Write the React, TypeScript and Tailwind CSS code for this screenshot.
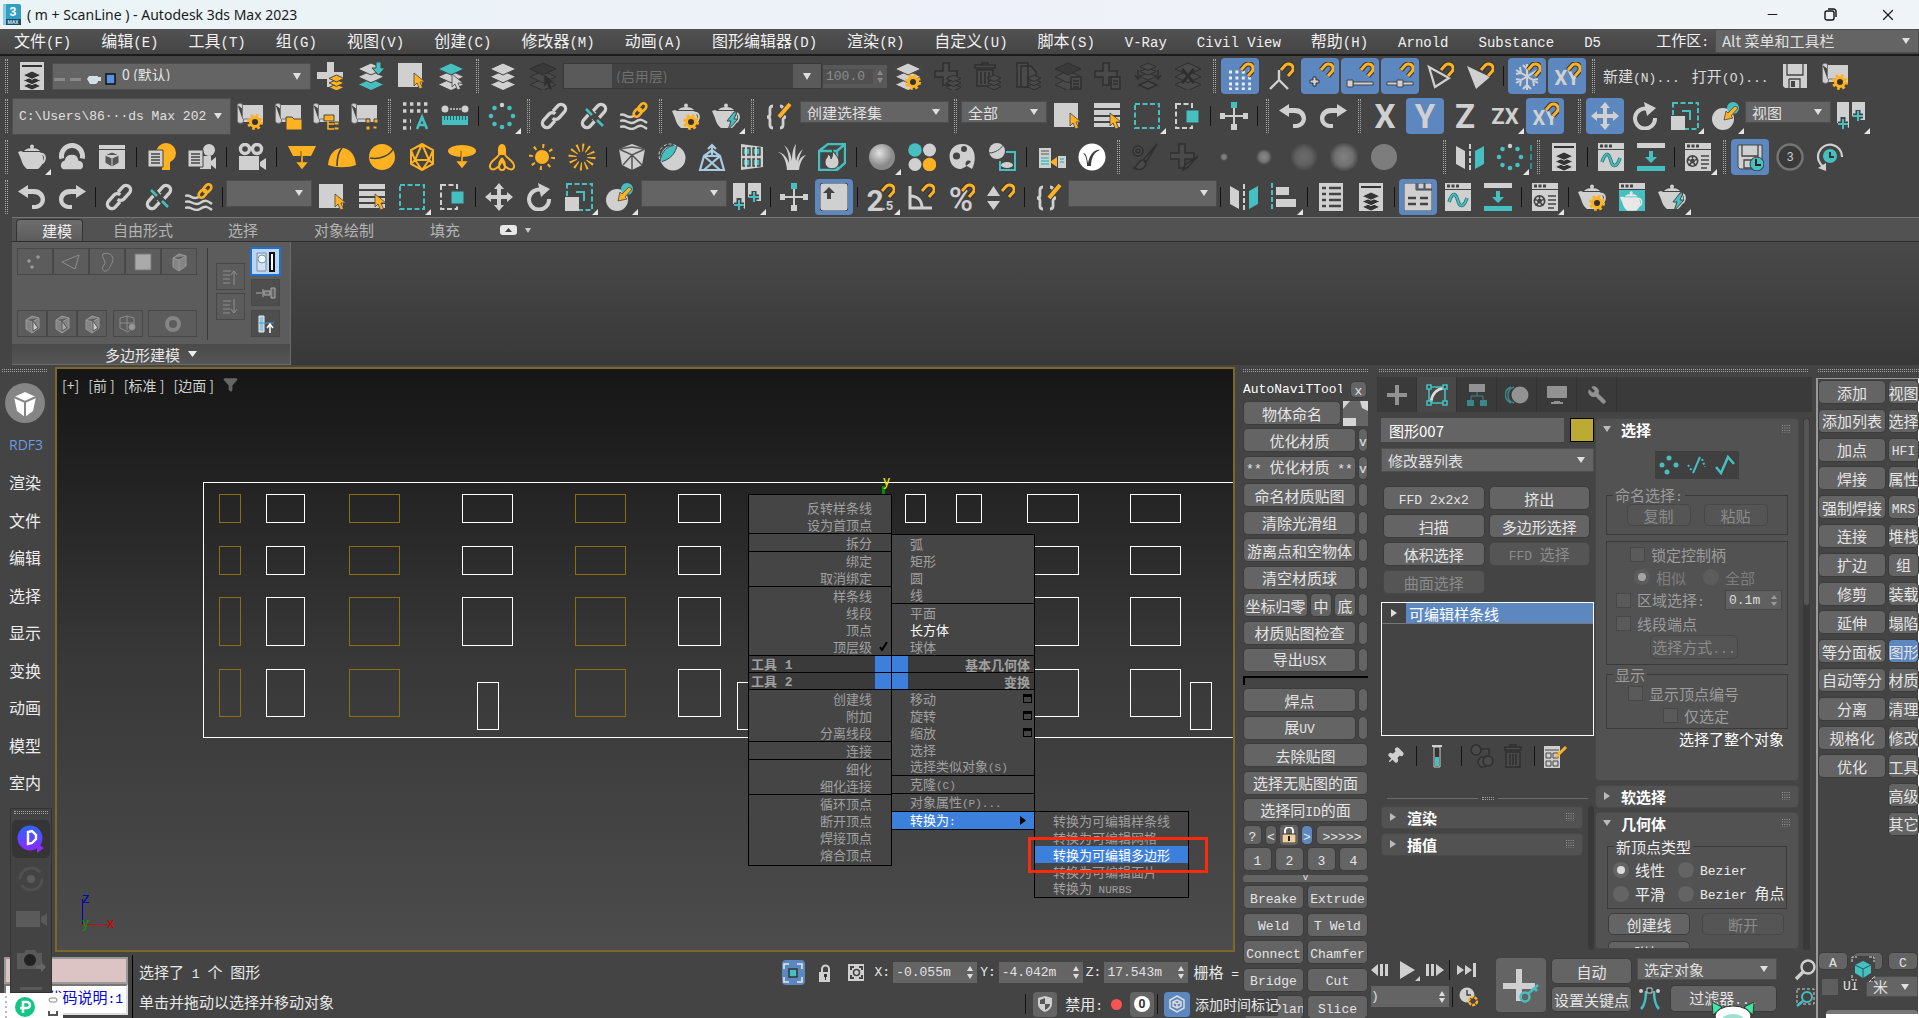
import React from 'react';
import { Minus, X, Wrench, Pin, Filter } from 'lucide-react';

const LIGHT = '#d0d0d0';
const TEAL = '#45bfc0';
const AMBER = '#ffb221';
const DARK = '#2f2f2f';
const BG = '#444444';

/* ---------- icon building blocks (28x28 canvas) ---------- */

interface StackProps {
  x?: number;
  y?: number;
  w?: number;
  colors?: string[];
  stroke?: string;
}

const Stack: React.FC<StackProps> = ({ x = 1, y = 1, w = 26, colors = [LIGHT, LIGHT, LIGHT], stroke = BG }) => {
  const h = w * 0.46;
  const step = w * 0.3;
  return (
    <g stroke={stroke} strokeWidth={1}>
      {colors
        .map((c, i) => (
          <path
            key={i}
            fill={c}
            d={`M${x} ${y + h / 2 + i * step}L${x + w / 2} ${y + i * step}L${x + w} ${y + h / 2 + i * step}L${x + w / 2} ${y + h + i * step}Z`}
          />
        ))
        .reverse()}
    </g>
  );
};

const Magnet = () => (
  <g fill="none">
    <path d="M15 8l4-4.500a4.600 4.600 0 0 1 7 6l-4 4.500" stroke="#333" strokeWidth={5} />
    <path d="M15 8l4-4.500a4.600 4.600 0 0 1 7 6l-4 4.500" stroke={AMBER} strokeWidth={3} />
  </g>
);

const Gear = ({ x = 19, y = 20 }: { x?: number; y?: number }) => (
  <g fill="none">
    <circle cx={x} cy={y} r={6.5} stroke={AMBER} strokeWidth={3} strokeDasharray="2.600 2.500" />
    <circle cx={x} cy={y} r={4.5} stroke={AMBER} strokeWidth={3} fill="#333" />
  </g>
);

const Cursor = ({ x = 16, y = 12, c = AMBER }: { x?: number; y?: number; c?: string }) => (
  <path
    transform={`translate(${x} ${y})`}
    d="M0 0v13l3-3 2.500 6 3-1.200L6 9h5z"
    fill={c}
    stroke={BG}
    strokeWidth={0.8}
  />
);

const Teapot = ({ c = LIGHT }: { c?: string }) => (
  <g fill={c}>
    <path d="M5 9h17c5 4 4 13-2 17H9c-4-3-5-7-6-10L0 9l3-1z" />
    <path d="M6 8c3-4 13-4 16 0z" />
    <circle cx={14} cy={3.500} r={2} />
    <path d="M22 11c6-2 7 8 0 10" fill="none" stroke={c} strokeWidth={2} />
  </g>
);

const Chain = ({ c = LIGHT }: { c?: string }) => (
  <g transform="rotate(-48 14 14)" fill="none" stroke={c} strokeWidth={3.4}>
    <path d="M11 18H4a4.500 4.500 0 0 1 0-9h8a4.500 4.500 0 0 1 4.500 4.500" />
    <path d="M17 10h7a4.500 4.500 0 0 1 0 9h-8a4.500 4.500 0 0 1-4.500-4.500" />
  </g>
);

const Scroll = () => (
  <g>
    <path d="M7 3h20v17H7z" fill={LIGHT} />
    <path d="M1.500 3c0-2 5-2 5 0v14M1.500 3v16c0 3 6 3 6 0v-2H20" fill={LIGHT} stroke="#777" strokeWidth={1} />
  </g>
);

const Window = ({ children, fill = LIGHT }: { children?: React.ReactNode; fill?: string }) => (
  <g>
    <path d="M1 0h26v6H1z" fill={LIGHT} />
    <path d="M3 1.500h3v3H3zM7.500 1.500h3v3h-3zM12 1.500h3v3h-3z" fill="#444" />
    <path d="M1 7h26v21H1z" fill={fill} />
    {children}
  </g>
);

const Sheet = () => (
  <g fill={LIGHT}>
    <path d="M1 1h26v5H1zM1 8h26v5H1zM1 15h26v4H1zM1 21h26v4H1z" />
  </g>
);

const Glyph = ({ text, size = 28, weight = 700 }: { text: string; size?: number; weight?: number }) => (
  <text
    x={14}
    y={14 + size * 0.36}
    textAnchor="middle"
    fontFamily="Roboto, sans-serif"
    fontWeight={weight}
    fontSize={size}
    fill={LIGHT}
  >
    {text}
  </text>
);

const dashedBox = (c: string, d: string) => (
  <path d={d} fill="none" stroke={c} strokeWidth={2} strokeDasharray="5 2.500" />
);

const ringDots = (
  <g fill={TEAL}>
    <circle cx={14} cy={3} r={2.2} fill={LIGHT} />
    <circle cx={21.5} cy={6} r={2.3} />
    <circle cx={25} cy={14} r={2.3} />
    <circle cx={21.5} cy={22} r={2.3} />
    <circle cx={14} cy={25} r={2.3} />
    <circle cx={6.5} cy={22} r={2.3} />
    <circle cx={3} cy={14} r={2.3} />
    <circle cx={6.5} cy={6} r={2.3} />
  </g>
);

const blob = (r: number, c: string, id: string) => (
  <g>
    <radialGradient id={id}>
      <stop offset="0" stopColor={c} />
      <stop offset="0.600" stopColor={c} stopOpacity={0.7} />
      <stop offset="1" stopColor={c} stopOpacity={0} />
    </radialGradient>
    <circle cx={14} cy={14} r={r} fill={`url(#${id})`} />
  </g>
);

const waves = (
  <g fill="none" stroke={LIGHT} strokeWidth={2.4}>
    <path d="M0 13c5-3 7 5 14 1M0 19c6-3 9 5 15 1s8-2 12 1M0 25c6-3 9 5 15 1s8-2 12 1" />
    <g transform="rotate(-48 20 8)" stroke={AMBER} strokeWidth={2.6}>
      <rect x={12} y={5} width={9} height={6} rx={3} />
      <rect x={19} y={5} width={9} height={6} rx={3} />
    </g>
  </g>
);

const off = { fill: '#4a4a4a', stroke: DARK, strokeWidth: 1.5 };

const ICONS: Record<string, React.ReactNode> = {
  explorer: (
    <g>
      <path d="M2 0h24v28H2z" fill={LIGHT} />
      <path d="M4 3h20v2H4z" fill="#333" />
      <Stack x={5} y={9} w={18} colors={['#333', '#333', '#333']} stroke={LIGHT} />
    </g>
  ),
  layerNew: (
    <g>
      <path d="M10 0h7v10h9v7H17v8h-7v-8H0v-7h10z" fill={LIGHT} />
      <Stack x={12} y={13} w={15} colors={[AMBER, AMBER, AMBER]} />
    </g>
  ),
  layerAdd: (
    <g>
      <Stack colors={[LIGHT, LIGHT, TEAL]} />
      <path d="M19 0h5v6h4l-6.500 7L15 6h4z" fill={TEAL} stroke={BG} />
    </g>
  ),
  select: (
    <g>
      <path d="M1 1h24v24H1z" fill={LIGHT} />
      <Cursor x={17} y={11} />
    </g>
  ),
  layerSelect: (
    <g>
      <Stack colors={[TEAL, LIGHT, LIGHT]} />
      <Cursor x={15} y={12} c={LIGHT} />
    </g>
  ),
  layers: <Stack />,
  layersOff: (
    <g>
      <Stack colors={['#3a3a3a', '#4a4a4a', '#4a4a4a']} stroke={DARK} />
      <Cursor x={15} y={12} c={DARK} />
    </g>
  ),
  layerGear: (
    <g>
      <Stack />
      <Gear />
    </g>
  ),
  addOff: (
    <g>
      <path d="M9 1h6v8h8v6h-8v8H9v-8H1V9h8z" {...off} />
      <Stack x={12} y={13} w={15} colors={['#4a4a4a', '#4a4a4a', '#4a4a4a']} stroke={DARK} />
    </g>
  ),
  trashOff: (
    <g>
      <path d="M8 3V1h6v2M1 3h20v3H1zM3 8h16v16H3z" {...off} />
      <path d="M7 10v12M11 10v12M15 10v12" {...off} />
      <Stack x={13} y={13} w={14} colors={['#4a4a4a', '#4a4a4a', '#4a4a4a']} stroke={DARK} />
    </g>
  ),
  copyOff: (
    <g>
      <path d="M3 1h11v24H3zM7 4h10l5 6v15H7z" {...off} />
      <Stack x={13} y={13} w={14} colors={['#4a4a4a', '#4a4a4a', '#4a4a4a']} stroke={DARK} />
    </g>
  ),
  layersPasteOff: (
    <g>
      <Stack colors={['#3a3a3a', '#4a4a4a', '#4a4a4a']} stroke={DARK} />
      <path d="M17 15h10v12H17zM19 19h6M19 22h6M19 25h6" {...off} />
    </g>
  ),
  addPasteOff: (
    <g>
      <path d="M9 1h6v8h8v6h-8v8H9v-8H1V9h8z" {...off} />
      <path d="M17 15h9v12h-9zM19 19h5M19 22h5" {...off} />
    </g>
  ),
  layersDownOff: (
    <g>
      <Stack x={6} y={1} w={16} colors={['#4a4a4a', '#4a4a4a', '#4a4a4a']} stroke={DARK} />
      <path d="M4 8v8M1 13l3 4 3-4M24 8v8M21 13l3 4 3-4M5 23l9-4 9 4-9 4z" {...off} />
    </g>
  ),
  layersXOff: (
    <g>
      <Stack colors={['#4a4a4a', '#4a4a4a', '#4a4a4a']} stroke={DARK} />
      <path d="M8 7l12 14M20 7L8 21" stroke={DARK} strokeWidth={3} />
    </g>
  ),
  snapGrid: (
    <g>
      <path
        d="M3 10h22M3 16h22M3 22h22M3 27h22"
        stroke="#eee"
        strokeWidth={3}
        strokeDasharray="3 3.400"
      />
      <Magnet />
    </g>
  ),
  snapPivot: (
    <g>
      <path d="M13 8v10L4 27M13 18l9 9" fill="none" stroke={LIGHT} strokeWidth={2.4} />
      <Magnet />
    </g>
  ),
  snapVertex: (
    <g>
      <path d="M4 18h3v-3h3v3h3v3h-3v3H7v-3H4z" fill={LIGHT} stroke="#333" />
      <Magnet />
    </g>
  ),
  snapEnd: (
    <g>
      <path d="M7 20h20v3H7z" fill={LIGHT} stroke="#444" />
      <path d="M1 18h6v7H1z" fill={LIGHT} stroke="#444" />
      <Magnet />
    </g>
  ),
  snapMid: (
    <g>
      <path d="M1 20h26v3H1z" fill={LIGHT} stroke="#444" />
      <path d="M11 18h6v7h-6z" fill={LIGHT} stroke="#444" />
      <Magnet />
    </g>
  ),
  snapFace: (
    <g>
      <path d="M3 5l6 20 14-9z" fill="none" stroke={LIGHT} strokeWidth={2.2} />
      <Magnet />
    </g>
  ),
  snapFill: (
    <g>
      <path d="M1 4l9 23 14-12z" fill={LIGHT} />
      <Magnet />
    </g>
  ),
  snapFrozen: (
    <g>
      <path
        d="M14 2v26M3 8l22 13M25 8L3 21M10 3l4 4 4-4M10 27l4-4 4 4M3 12l5-1-1-6M25 17l-5 1 1 6M3 17l5 1-1 6M25 12l-5-1"
        fill="none"
        stroke={LIGHT}
        strokeWidth={2}
      />
      <Magnet />
    </g>
  ),
  snapXY: (
    <g>
      <g transform="translate(0 2)">
        <Glyph text="XY" size={20} />
      </g>
      <Magnet />
    </g>
  ),
  save: (
    <g>
      <path d="M2 2h24v24H4l-2-2z" fill={LIGHT} />
      <path d="M6 2v11h16V2M8 17h11v9M8 17v9" fill="none" stroke="#444" strokeWidth={1.3} />
      <path d="M10 19h4v6h-4z" fill="#444" />
    </g>
  ),
  projGear: (
    <g>
      <Scroll />
      <Gear />
    </g>
  ),
  projFolder: (
    <g>
      <Scroll />
      <path d="M12 15h6l2 2h8v11H12z" fill={AMBER} stroke={BG} />
    </g>
  ),
  projTree: (
    <g>
      <Scroll />
      <path d="M12 13h10v6H12zM22 20h5v3h-5zM22 25h5v3h-5z" fill={AMBER} stroke={BG} />
      <path d="M16 19v8h6M16 22h6" fill="none" stroke={AMBER} strokeWidth={1.5} />
    </g>
  ),
  projNodes: (
    <g>
      <Scroll />
      <path d="M16 17h4v4h-4zM24 17h4v4h-4zM16 24h4v4h-4zM23 24h4v3h-4z" fill={AMBER} stroke={BG} />
    </g>
  ),
  gridA: (
    <g>
      <path d="M2 2h25M2 9h25M2 19h8M2 26h8" stroke={LIGHT} strokeWidth={3.4} strokeDasharray="3.400 3.600" />
      <path d="M16 27l5-12 5 12M18 23h7" fill="none" stroke={TEAL} strokeWidth={2.6} />
    </g>
  ),
  ruler: (
    <g>
      <circle cx={4} cy={7} r={3.5} fill={LIGHT} />
      <circle cx={24} cy={7} r={3.5} fill={LIGHT} />
      <path d="M9 7h11" stroke={LIGHT} strokeWidth={1.5} strokeDasharray="2 1" />
      <path d="M1 14h26v9H1z" fill={TEAL} />
      <path d="M3 16h23" stroke="#2c5f60" strokeWidth={4} strokeDasharray="1 2" />
    </g>
  ),
  ring: ringDots,
  link: <Chain />,
  unlink: (
    <g>
      <Chain />
      <path d="M5 5l19 20" stroke={BG} strokeWidth={6} />
      <path d="M6 7l6 6M17 18l6 6" stroke={TEAL} strokeWidth={2.6} />
    </g>
  ),
  bind: waves,
  potGear: (
    <g>
      <Teapot />
      <Gear />
    </g>
  ),
  potFlash: (
    <g>
      <Teapot />
      <path d="M22 10l-7 9h4l-3 9 10-11h-4l3-7z" fill={TEAL} stroke={BG} />
    </g>
  ),
  braces: (
    <g fill="none">
      <path
        d="M9 4C5 4 6 8 6 12c0 2-1 3-3 3 2 0 3 1 3 3 0 4-1 8 3 8M16 4c4 0 3 4 3 8 0 2 1 3 3 3-2 0-3 1-3 3 0 4 1 8-3 8"
        stroke={LIGHT}
        strokeWidth={2.8}
      />
      <path d="M15 15L26 2" stroke={BG} strokeWidth={6} />
      <path d="M15 15L26 2" stroke={AMBER} strokeWidth={4} />
    </g>
  ),
  selectName: (
    <g>
      <Sheet />
      <Cursor x={17} y={11} />
    </g>
  ),
  region: dashedBox(TEAL, 'M2 2h24v24H2z'),
  crossing: (
    <g>
      {dashedBox(LIGHT, 'M3 2h16v24H3z')}
      <path d="M13 8h13v13H13z" fill={TEAL} stroke={BG} />
    </g>
  ),
  pivotCross: (
    <g fill={LIGHT}>
      <path d="M13 5h2v18h-2zM3 13h22v2H3zM0 11h5v6H0zM23 11h5v6h-5zM11 22h6v6h-6z" />
      <path d="M11 0h6v6h-6z" fill={TEAL} />
    </g>
  ),
  undo: <path d="M10 2v4h6c14 0 15 19 1 20h-3v-4h2c9 0 9-11-1-11h-5v4L0 8.500z" fill={LIGHT} />,
  redo: <path d="M18 2v4h-6c-14 0-15 19-1 20h3v-4h-2c-9 0-9-11 1-11h5v4l10-6.500z" fill={LIGHT} />,
  axisX: <Glyph text="X" size={33} />,
  axisY: <Glyph text="Y" size={33} />,
  axisZ: <Glyph text="Z" size={33} />,
  axisZX: <Glyph text="ZX" size={22} />,
  move: (
    <path
      d="M14 0l5 6h-3v6h6V9l6 5-6 5v-3h-6v6h3l-5 6-5-6h3v-6H6v3l-6-5 6-5v3h6V6H9z"
      fill={LIGHT}
    />
  ),
  rotate: (
    <g>
      <path d="M17 7A10 10 0 1 0 24 16" fill="none" stroke={LIGHT} strokeWidth={4} />
      <path d="M13 0l12 6-9 8z" fill={LIGHT} />
    </g>
  ),
  scale: (
    <g>
      {dashedBox(TEAL, 'M2 1h25v26H2z')}
      <path d="M0 14h14v14H0z" fill={LIGHT} />
      <path d="M11 9h8v9" fill="none" stroke={TEAL} strokeWidth={2} />
    </g>
  ),
  place: (
    <g>
      <circle cx={12} cy={17} r={11} fill={LIGHT} />
      <circle cx={22} cy={6} r={6} fill={TEAL} />
      <path d="M24 4l-7 7-2-2-2 9 9-2-2-2 7-8z" fill={AMBER} stroke="#444" strokeWidth={0.8} />
    </g>
  ),
  pivotUse: (
    <g>
      <path d="M0 0h12v26L6 21H0zM15 0h13v18h-6l-7-4z" fill={LIGHT} />
      <path d="M6 15v13M1 22h10M21 8v12M16 14h10" stroke={BG} strokeWidth={5} />
      <path d="M6 17v10M1 22h10M21 9v10M16 14h10" stroke={TEAL} strokeWidth={2} />
    </g>
  ),
  teapot: <Teapot />,
  sphereCloud: (
    <g>
      <circle cx={14} cy={13} r={10.500} fill="none" stroke={LIGHT} strokeWidth={5} strokeDasharray="38 100" transform="rotate(165 14 13)" />
      <path d="M5 27c-5-3-3-9 1-10 2-8 14-8 15 0 6 1 6 8 2 10z" fill={LIGHT} stroke={BG} strokeWidth={1.5} />
    </g>
  ),
  cubeWindow: (
    <g>
      <path d="M1 2h26v4H1z" fill={LIGHT} />
      <path d="M1 7h26v19H1z" fill={LIGHT} />
      <path d="M14 9l7 3v8l-7 4-7-4v-8zM7 12l7 3 7-3M14 15v9" fill="#555" stroke={LIGHT} strokeWidth={1} />
    </g>
  ),
  lightList: (
    <g>
      <circle cx={18} cy={10} r={10} fill={AMBER} />
      <path d="M14 19h8v8h-8z" fill={AMBER} />
      <path d="M0 7h15v17H0z" fill={LIGHT} stroke={BG} />
      <path d="M3 11h9M3 14h9M3 17h9M3 20h9" stroke="#444" strokeWidth={1.5} />
    </g>
  ),
  camList: (
    <g>
      <circle cx={21} cy={7} r={6} fill={LIGHT} />
      <path d="M12 13h11v13H12zM28 14v12l-5-4v-4z" fill={LIGHT} />
      <path d="M0 7h15v17H0z" fill={LIGHT} stroke={BG} />
      <path d="M3 11h9M3 14h9M3 17h9M3 20h9" stroke="#444" strokeWidth={1.5} />
    </g>
  ),
  camera: (
    <g>
      <circle cx={7} cy={6} r={4.5} fill="none" stroke={LIGHT} strokeWidth={3.4} />
      <circle cx={19} cy={6} r={4.5} fill="none" stroke={LIGHT} strokeWidth={3.4} />
      <path d="M1 13h20v14H1zM28 15v12l-6-4v-4z" fill={LIGHT} />
    </g>
  ),
  lightPlane: (
    <g fill={AMBER}>
      <path d="M0 3h28l-5 10H5z" />
      <path d="M14 9v14M10 20l4 5 4-5z" stroke={AMBER} strokeWidth={1.6} />
      <path d="M12.500 8h1v6h-1z" fill="#7a5510" />
    </g>
  ),
  lightDome: (
    <g>
      <path d="M0 22C1 10 8 5 14 5s13 5 14 17c-8 3-20 3-28 0z" fill={AMBER} />
      <path d="M14 5c-4 4-5 11-5 18" fill="none" stroke={BG} strokeWidth={1.6} />
    </g>
  ),
  lightSphere: (
    <g>
      <circle cx={14} cy={14} r={13} fill={AMBER} />
      <path d="M2 15c10 2 20-3 23-9" fill="none" stroke={BG} strokeWidth={1.6} />
    </g>
  ),
  lightMesh: (
    <path
      d="M14 1l11 6v14l-11 6-11-6V7zM14 1L7 17h14zM3 7l4 10-4 4M25 7l-4 10 4 4M7 17l7 10 7-10"
      fill="none"
      stroke={AMBER}
      strokeWidth={2}
    />
  ),
  lightDisc: (
    <g>
      <ellipse cx={14} cy={8} rx={14} ry={6} fill={AMBER} />
      <path d="M14 8v15M10 19l4 5 4-5z" fill={AMBER} stroke={AMBER} strokeWidth={1.6} />
      <path d="M12.500 8h1v6h-1z" fill="#7a5510" />
    </g>
  ),
  lightIes: (
    <g>
      <path d="M10 7c0-8 8-8 8 0v5h-8z" fill={AMBER} />
      <path d="M11 12C7 17 1 19 2 24s10 2 12-8c2 10 11 13 12 8s-5-7-9-12M14 15c-4 5-4 12 0 12s4-7 0-12" fill="none" stroke={AMBER} strokeWidth={2} />
    </g>
  ),
  sun: (
    <g>
      <circle cx={14} cy={14} r={7} fill={AMBER} />
      <circle cx={14} cy={14} r={11} fill="none" stroke={AMBER} strokeWidth={4} strokeDasharray="2 6.640" />
    </g>
  ),
  sunRays: <circle cx={14} cy={14} r={9.5} fill="none" stroke={AMBER} strokeWidth={8} strokeDasharray="1.600 3.370" />,
  boxGeo: (
    <g>
      <path d="M1 6L14 1l13 5-3 16-10 5-10-5z" fill={LIGHT} />
      <path d="M1 6l13 6 13-6M14 12v15M14 12L5 22M14 12l10 10M1 6l13-2 13 2" fill="none" stroke="#555" strokeWidth={1.5} />
    </g>
  ),
  clipper: (
    <g>
      <circle cx={15} cy={15} r={12.5} fill={LIGHT} />
      <path d="M2 19C3 8 10 2 19 2c-1 8-7 15-17 17z" fill={TEAL} stroke={BG} />
      <circle cx={12} cy={12} r={11} fill="none" stroke={LIGHT} strokeDasharray="3 2" />
    </g>
  ),
  tower: (
    <g fill="none" stroke="#a9cbe0" strokeWidth={2.2}>
      <path d="M6 13h16l4 14H2zM6 13l16 14M22 13L6 27M14 13V2M10 6l4-4 4 4M6 13l8-6 8 6" />
    </g>
  ),
  lattice: (
    <g>
      <path d="M3 1l22 3v20L3 27z" fill={LIGHT} />
      <path d="M5 5h7v7H5zM15 5h7v7h-7zM5 16h7v7H5zM15 16h7v7h-7z" fill={TEAL} stroke="#444" strokeWidth={1.4} />
      <path d="M8 3v22M18 3v22" stroke={LIGHT} strokeWidth={2} />
    </g>
  ),
  fur: (
    <path
      d="M9 27C8 17 5 11 0 9c6 1 9 6 11 11C11 12 9 6 6 2c5 4 7 10 8 16 0-7 1-13 4-17-1 5-1 12 0 17 1-5 3-9 7-12-3 5-4 9-5 14 2-5 4-7 8-8-5 5-6 9-7 15z"
      fill={LIGHT}
    />
  ),
  fireBox: (
    <g>
      <path d="M1 8l9-7h17v19l-8 7H1zM1 8h18v19M19 8l8-7" fill="none" stroke={TEAL} strokeWidth={2.4} />
      <path d="M14 5c1 6 7 8 7 14 0 9-14 9-14 0 0-4 3-4 3-8 2 1 3 3 3 5 2-3 2-7 1-11z" fill={LIGHT} stroke={BG} />
    </g>
  ),
  material: (
    <g>
      <radialGradient id="ballShade" cx="0.400" cy="0.350">
        <stop offset="0" stopColor="#e2e2e2" />
        <stop offset="1" stopColor="#8a8a8a" />
      </radialGradient>
      <circle cx={14} cy={14} r={13} fill="url(#ballShade)" />
    </g>
  ),
  materials: (
    <g fill={LIGHT}>
      <circle cx={7} cy={7} r={6.8} fill={TEAL} />
      <circle cx={21.5} cy={7} r={6.5} />
      <circle cx={7} cy={21.5} r={6.5} />
      <circle cx={21.5} cy={21.5} r={6.8} fill={AMBER} />
    </g>
  ),
  palette: (
    <g>
      <path d="M14 1C5 1 0 9 2 17s8 9 11 9l6-3 5 3c5-10 4-25-10-25z" fill={LIGHT} />
      <circle cx={16} cy={6} r={3} fill={BG} />
      <circle cx={8.5} cy={13} r={3.6} fill={BG} />
      <path d="M18 23c-2-5 3-7 5-4" fill={BG} />
    </g>
  ),
  matConvert: (
    <g>
      <circle cx={9} cy={8} r={8} fill={LIGHT} />
      <path d="M1 10c6 0 12-4 14-8" stroke={BG} fill="none" />
      <path d="M18 9h9v18H12v-9" fill="none" stroke={TEAL} strokeWidth={2} />
      <ellipse cx={19} cy={22} rx={6} ry={3} fill={LIGHT} />
    </g>
  ),
  transferList: (
    <g>
      <path d="M1 5h12v20H1zM20 13h8v12h-8z" fill={LIGHT} />
      <path d="M3 8h8M3 11h8" stroke="#555" />
      <path d="M3 15h8M3 18h8M3 21h8M22 16h4M22 19h4" stroke={TEAL} strokeWidth={1.6} />
      <path d="M12 19l7-5v10z" fill={AMBER} />
    </g>
  ),
  vray: (
    <g>
      <circle cx={14} cy={14} r={13.5} fill="#fff" />
      <path d="M5 10c3 0 4 4 5 10 2-9 7-14 12-13-6 2-9 8-9 16h-4c0-6-1-10-4-13z" fill="#3c3c3c" />
    </g>
  ),
  paintOff: (
    <g>
      <circle cx={8} cy={8} r={5} {...off} />
      <circle cx={8} cy={8} r={2} {...off} />
      <path d="M27 1L14 16l2 3zM13 17c-5 0-5 6-9 8 5 3 12 1 12-5z" {...off} />
    </g>
  ),
  paintAddOff: (
    <g>
      <path d="M9 1h6v9h9v6h-9v9H9v-9H0v-6h9z" {...off} />
      <path d="M28 13L18 24l-5 3 2-5z" {...off} />
    </g>
  ),
  dot1: blob(4, '#8a8a8a', 'blob1'),
  dot2: blob(8, '#8a8a8a', 'blob2'),
  dot3: blob(14, '#6c6c6c', 'blob3'),
  dot4: blob(15, '#828282', 'blob4'),
  dot5: <circle cx={14} cy={14} r={13} fill="#7d7d7d" />,
  mirror: (
    <g>
      <path d="M0 3l9 5v18l-9-5z" fill={LIGHT} />
      <path d="M28 3l-9 5v18l9-5z" fill={TEAL} />
      <path d="M14 1v27" stroke={LIGHT} strokeWidth={2} strokeDasharray="5 2" />
    </g>
  ),
  align: (
    <g>
      <path d="M2 0v28" stroke={TEAL} strokeWidth={2} strokeDasharray="5 2" />
      <path d="M6 4h13v8H6zM6 16h20v8H6z" fill={LIGHT} />
    </g>
  ),
  curve: (
    <Window>
      <path d="M5 19c4-12 7-8 9-1s6 6 9-3" fill="none" stroke="#1d6a6a" strokeWidth={3.4} />
      <path d="M5 19c4-12 7-8 9-1s6 6 9-3" fill="none" stroke={TEAL} strokeWidth={2} />
    </Window>
  ),
  download: (
    <g>
      <path d="M0 0h28v5H0z" fill={LIGHT} />
      <path d="M0 23h28v5H0z" fill={TEAL} />
      <path d="M12 8h4v6h4l-6 6-6-6h4z" fill={TEAL} />
    </g>
  ),
  renderSet: (
    <Window>
      <circle cx={8.5} cy={18} r={6} fill="#444" />
      <circle cx={8.5} cy={18} r={3.4} fill="none" stroke={LIGHT} strokeWidth={2} strokeDasharray="2.500 1.600" />
      <path d="M17 13h8M17 17h8M17 21h8M17 25h6" stroke="#444" strokeWidth={1.6} />
    </Window>
  ),
  autosave: (
    <g>
      <path d="M2 2h24v24H4l-2-2z" fill={LIGHT} stroke="#444" />
      <path d="M6 2v11h16V2M8 17h8v8H8z" fill="none" stroke="#444" strokeWidth={1.3} />
      <circle cx={21} cy={21} r={7} fill={TEAL} stroke="#333" />
      <path d="M20 16v6h5" fill="none" stroke="#222" strokeWidth={2} />
    </g>
  ),
  count: (
    <g>
      <circle cx={14} cy={14} r={12.5} fill="#3a3a3a" stroke="#757575" strokeWidth={2.4} />
      <text x={14} y={18} textAnchor="middle" fontSize={12} fontFamily="Liberation Mono" fill={LIGHT}>
        3
      </text>
    </g>
  ),
  history: (
    <g>
      <path d="M26 14A12 12 0 1 0 8 24" fill="none" stroke={LIGHT} strokeWidth={2.2} />
      <path d="M2 25l8 3 0-8z" fill={LIGHT} />
      <circle cx={14} cy={13} r={7} fill={TEAL} />
      <path d="M14 9v5h4" fill="none" stroke="#333" strokeWidth={2} />
    </g>
  ),
  keyboard: (
    <g>
      <rect x={0} y={0} width={28} height={28} rx={3} fill={LIGHT} stroke="#444" />
      <path d="M9 4l6 6h-4v6H7v-6H3z" fill="#444" />
    </g>
  ),
  snap25: (
    <g>
      <g transform="translate(-6 3)">
        <Glyph text="2" size={30} />
      </g>
      <text x={15} y={27} fontSize={13} fontWeight={700} fontFamily="Roboto" fill={LIGHT}>
        .5
      </text>
      <Magnet />
    </g>
  ),
  snapAngle: (
    <g>
      <path d="M3 3v22h22M3 13c8 0 12 5 12 12" fill="none" stroke={LIGHT} strokeWidth={3} />
      <Magnet />
    </g>
  ),
  snapPercent: (
    <g>
      <g transform="translate(0 2)">
        <Glyph text="%" size={33} weight={500} />
      </g>
      <Magnet />
    </g>
  ),
  snapSpinner: (
    <g>
      <path d="M0 13L6.500 3l6.500 10zM0 18h13L6.500 27z" fill={LIGHT} />
      <Magnet />
    </g>
  ),
  listView: (
    <g>
      <path d="M2 0h24v28H2z" fill={LIGHT} />
      <path d="M5 5h4M12 5h12M5 11h4M12 11h12M5 17h4M12 17h12M5 23h4M12 23h12" stroke="#444" strokeWidth={2.4} />
    </g>
  ),
  ribbonToggle: (
    <g>
      <path d="M0 0h12v7h16v21H0z" fill={LIGHT} stroke="#444" />
      <path d="M14 0h6v6h-6zM21 0h7v6h-7z" fill={LIGHT} stroke="#444" />
      <path d="M4 15h8M16 15h8M4 21h8M16 21h8" stroke="#444" strokeWidth={2.4} />
    </g>
  ),
  frameWindow: (
    <Window fill={TEAL}>
      <g transform="translate(2 7) scale(0.800)">
        <Teapot c="#e8e8e8" />
      </g>
    </Window>
  ),
};

/* ---------- toolbar pieces ---------- */

const Grip = () => (
  <span className="mx-px grid w-[10px] shrink-0 place-items-center">
    <span className="h-[34px] w-[3px] border-x border-dotted border-[#a8a8a8]" />
  </span>
);

const Sep = ({ wide = false }: { wide?: boolean }) => (
  <span className={`h-5 w-px shrink-0 self-center bg-[#141414] ${wide ? 'mr-[5px] ml-1' : 'mx-[3px]'}`} />
);

const Tool = ({ name, on = false, fly = false }: { name: string; on?: boolean; fly?: boolean }) => (
  <button
    type="button"
    aria-label={name}
    className={`relative mx-px grid h-9 w-[38px] shrink-0 place-items-center rounded ${on ? 'bg-[#5d87bf]' : ''}`}
  >
    <svg width="28" height="28" viewBox="0 0 28 28">
      {ICONS[name]}
    </svg>
    {fly && (
      <svg className="absolute right-0 bottom-0" width="6" height="6">
        <path d="M6 0v6H0z" fill="#e6e6e6" />
      </svg>
    )}
  </button>
);

// "|" and "/" are separators, ":" a grip; "*" marks an active tool and "+" one with a flyout
const Tools = ({ list }: { list: string }) => (
  <>
    {list.split(' ').map((item, i) => {
      if (item === '|') return <Sep key={i} />;
      if (item === '/') return <Sep key={i} wide />;
      if (item === ':') return <Grip key={i} />;
      return <Tool key={i} name={item.replace(/[*+]/g, '')} on={item.includes('*')} fly={item.includes('+')} />;
    })}
  </>
);

const Combo = ({ value, label, className = '' }: { value: string; label: string; className?: string }) => (
  <span className={`relative block shrink-0 border border-[#4e4e4e] bg-[#646464] text-[#e0e0e0] ${className}`}>
    <select aria-label={label} className="h-full w-full appearance-none bg-transparent pr-6 pl-[6px] outline-none">
      <option>{value}</option>
    </select>
    <svg className="pointer-events-none absolute top-1/2 right-2 -translate-y-1/2" width="8" height="6">
      <path d="M0 0h8L4 6z" fill="#e0e0e0" />
    </svg>
  </span>
);

// Latin runs are set in a mono face next to the CJK glyphs
const T = ({ children, latin = 'text-[13px]' }: { children: string; latin?: string }) => (
  <span className="whitespace-pre">
    {children.split(/([\x20-\x7e]+)/).map((part, i) =>
      i % 2 ? (
        <span key={i} className={`font-['Liberation_Mono',monospace] ${latin}`}>
          {part}
        </span>
      ) : (
        part
      )
    )}
  </span>
);

interface BtnProps {
  text?: string;
  className?: string;
  disabled?: boolean;
  active?: boolean;
}

const Btn: React.FC<BtnProps> = ({ text = '', className = '', disabled = false, active = false }) => (
  <button
    type="button"
    disabled={disabled}
    aria-label={text || '选项'}
    className={`flex items-center justify-center overflow-hidden rounded-[5px] border leading-none ${
      disabled ? 'border-[#474747] bg-[#555] text-[#8b8b8b]' : 'border-[#3c3c3c] text-[#e4e4e4]'
    } ${disabled ? '' : active ? 'bg-[#5d87bf]' : 'bg-[#646464]'} ${className}`}
  >
    <T>{text}</T>
  </button>
);

const HGrip = ({ className = '' }: { className?: string }) => (
  <div className={`h-[3px] border-y border-dotted border-[#a0a0a0] ${className}`} />
);

const MENUS = [
  '文件(F)', '编辑(E)', '工具(T)', '组(G)', '视图(V)', '创建(C)', '修改器(M)', '动画(A)', '图形编辑器(D)',
  '渲染(R)', '自定义(U)', '脚本(S)', 'V-Ray', 'Civil View', '帮助(H)', 'Arnold', 'Substance', 'D5',
];

const TitleBar = () => (
  <header className="flex h-[29px] shrink-0 items-center bg-gradient-to-r from-[#eaf4f6] via-[#eef1f9] to-[#eef4f8] pl-[3px] text-[#1a1a1a]">
    <svg width="18" height="22" viewBox="0 0 18 22">
      <rect width="18" height="21" rx="2" fill="#2f9fc6" />
      <path d="M0 2v19h3V0H2z" fill="#8ccbe2" />
      <path d="M3 15h15v6H3z" fill="#1b4d66" />
      <text x="10" y="12" textAnchor="middle" fontSize="12" fontWeight="700" fontFamily="Roboto" fill="#fff">3</text>
      <text x="10" y="20" textAnchor="middle" fontSize="5" fontWeight="700" fontFamily="Roboto" fill="#cfe6ef">MAX</text>
    </svg>
    <h1 className="ml-[6px] flex-1 font-['Noto_Sans',sans-serif] text-[14px]">( m + ScanLine ) - Autodesk 3ds Max 2023</h1>
    <button type="button" aria-label="最小化" className="grid w-[58px] place-items-center"><Minus size={15} strokeWidth={1.8} /></button>
    <button type="button" aria-label="还原" className="grid w-[58px] place-items-center">
      <svg width="13" height="13" fill="none" stroke="#111" strokeWidth="1.400"><rect x="1" y="3" width="9" height="9" rx="2" /><path d="M4 1h5.500A2.500 2.500 0 0 1 12 3.500V9" /></svg>
    </button>
    <button type="button" aria-label="关闭" className="mr-[2px] grid w-[58px] place-items-center"><X size={18} strokeWidth={1.6} /></button>
  </header>
);

const MenuBar = () => (
  <nav className="flex h-[27px] shrink-0 items-center border-b-2 border-[#1c1c1c] bg-gradient-to-b from-[#525252] to-[#444] pb-[2px] pl-[14px] text-[16px] leading-none text-[#f0f0f0]">
    <div className="flex flex-1 gap-[30px]">
      {MENUS.map((m) => (
        <button key={m} type="button"><T latin="text-[14px]">{m}</T></button>
      ))}
    </div>
    <span className="mr-[6px] text-[15px]"><T>工作区:</T></span>
    <Combo label="工作区" value="Alt 菜单和工具栏" className="h-6 w-[204px] text-[15px]" />
  </nav>
);

const Toolbars = () => (
  <div className="shrink-0 text-[14px] leading-none">
    <div className="flex h-10 items-center overflow-hidden">
      <Tools list=": explorer" />
      <span className="relative flex h-[27px] w-[259px] shrink-0 items-start gap-[5px] border border-[#4e4e4e] bg-[#646464] pt-1">
        <svg className="mt-1 shrink-0" width="64" height="13">
          <path d="M1 6h11v3H1zM17 6h11v3H17z" fill="#888" />
          <path d="M36 4h9v6l-2 2h-6l-3-5zM45 5h3v4h-3z" fill="#d8dde2" />
          <rect x="53" y="2" width="9" height="10" fill="#5b93e0" stroke="#111" strokeWidth="1.500" />
        </svg>
        <select aria-label="当前层" className="-mt-px flex-1 appearance-none bg-transparent text-[#e6e6e6] outline-none">
          <option>0 (默认)</option>
        </select>
        <svg className="pointer-events-none absolute top-[9px] right-[9px]" width="8" height="7"><path d="M0 0h8L4 7z" fill="#e0e0e0" /></svg>
      </span>
      <Tools list="layerNew layerAdd select layerSelect : layers layersOff" />
      <span className="flex h-[26px] w-[259px] shrink-0 border border-[#383838] bg-[#5a5a5a]">
        <select disabled aria-label="启用层" className="ml-12 w-[181px] appearance-none bg-[#424242] pl-1 text-[#707070] opacity-100">
          <option>(启用层)</option>
        </select>
        <svg className="m-auto" width="8" height="7"><path d="M0 0h8L4 7z" fill="#e0e0e0" /></svg>
      </span>
      <span className="mx-px flex h-[23px] w-[64px] shrink-0 items-center bg-[#585858]">
        <input disabled aria-label="不透明度" defaultValue="100.0" className="w-[50px] bg-[#505050] pl-[3px] font-['Liberation_Mono'] text-[13px] text-[#8c8c8c]" />
        <svg className="m-auto" width="6" height="13"><path d="M0 5h6L3 0zM0 8h6l-3 5z" fill="#888" /></svg>
      </span>
      <Tools list="layerGear addOff trashOff copyOff layersPasteOff addPasteOff layersDownOff layersXOff : snapGrid* snapPivot snapVertex* snapEnd* snapMid* snapFace snapFill | snapFrozen* snapXY* :" />
      <button type="button" className="ml-1 shrink-0 text-[15px] text-[#dcdcdc]"><T>新建(N)...</T></button>
      <button type="button" className="mr-[6px] ml-3 shrink-0 text-[15px] text-[#dcdcdc]"><T>打开(O)...</T></button>
      <Tools list="save projGear" />
    </div>
    <div className="flex h-10 items-center overflow-hidden">
      <Grip />
      <Combo label="项目文件夹" value="C:\Users\86···ds Max 2023" className="h-[37px] w-[219px] font-['Liberation_Mono'] text-[13px]" />
      <span className="flex [&>button]:w-9">
        <Tools list="projGear projFolder projTree projNodes" />
      </span>
      <Tools list=": gridA ruler | ring+ : link unlink bind : potGear potFlash+ : braces" />
      <Combo label="选择集" value="创建选择集" className="mb-2 ml-[2px] h-[22px] w-[149px] text-[15px]" />
      <Grip />
      <Combo label="过滤" value="全部" className="mb-2 h-[22px] w-[86px] text-[15px]" />
      <Tools list="select selectName region+ crossing | pivotCross | : undo redo : axisX axisY* axisZ axisZX+ snapXY*" />
      <span className="w-2 shrink-0" />
      <Tools list=": move* rotate scale+ place+" />
      <Combo label="坐标系" value="视图" className="mb-2 h-[22px] w-[86px] text-[15px]" />
      <Tools list="pivotUse+" />
    </div>
    <div className="flex h-[41px] items-center overflow-hidden">
      <Tools list=": teapot+ sphereCloud cubeWindow / lightList camList / camera / lightPlane lightDome lightSphere lightMesh lightDisc lightIes sun sunRays / boxGeo clipper tower lattice fur fireBox / material+ materials palette matConvert / transferList vray : paintOff paintAddOff dot1 dot2 dot3 dot4 dot5" />
      <span className="w-[34px] shrink-0" />
      <Tools list=": mirror ring+" />
      <span className="h-6 w-px shrink-0 border-l-2 border-dashed border-[#2f8f8f]" />
      <Tools list=": explorer | curve download | renderSet+ : autosave* count history" />
    </div>
    <div className="flex h-10 items-center overflow-hidden">
      <Tools list=": undo redo | link unlink bind |" />
      <Combo label="选择过滤器" value=" " className="mb-2 h-[27px] w-[86px]" />
      <Tools list="select selectName region+ crossing | move rotate scale+ place+" />
      <Combo label="参考坐标系" value=" " className="mb-2 ml-[2px] h-[27px] w-[86px]" />
      <Tools list="pivotUse+ | pivotCross keyboard* | snap25+ snapAngle snapPercent snapSpinner | braces" />
      <Combo label="命名选择集" value=" " className="mb-2 h-[27px] w-[149px]" />
      <Tools list="| mirror align+ | listView explorer | ribbonToggle* curve download | renderSet+ | potGear frameWindow potFlash+" />
    </div>
  </div>
);

/* ---------- ribbon ---------- */

const RibbonBtn = ({ label, className = 'w-9', children }: { label: string; className?: string; children: React.ReactNode }) => (
  <button type="button" aria-label={label} className={`grid h-[27px] place-items-center border border-[#484848] ${className}`}>
    <svg width="20" height="20" viewBox="0 0 20 20" fill="none" stroke="#8d8d8d">{children}</svg>
  </button>
);

const cubeShape = <path d="M4 6l6-4 7 2v10l-7 5-6-4zM4 6l6 2 7-4M10 8v10" fill="#848484" stroke="#999" />;

const Ribbon = () => (
  <section className="ml-3 flex h-[148px] shrink-0 flex-col border-t border-[#777]">
    <div className="flex h-6 items-center border-b border-[#2e2e2e] bg-[#525252] text-[15px] leading-none text-[#b4b4b4]">
      <button type="button" className="ml-1 h-[22px] w-[67px] self-end rounded-t border border-b-0 border-[#333] bg-gradient-to-b from-[#6e6e6e] to-[#5c5c5c] pl-[25px] text-left whitespace-nowrap text-[#eee]">建模</button>
      <button type="button" className="ml-[30px]">自由形式</button>
      <button type="button" className="ml-[55px]">选择</button>
      <button type="button" className="ml-[56px]">对象绘制</button>
      <button type="button" className="ml-[56px]">填充</button>
      <svg className="ml-10" width="32" height="12">
        <rect y="1" width="17" height="10" rx="3" fill="#e8e8e8" />
        <path d="M5 8h7L8.500 4z" fill="#444" />
        <path d="M25 4h6l-3 5z" fill="#ccc" />
      </svg>
    </div>
    <div className="flex-1 bg-gradient-to-b from-[#494949] to-[#383838]">
      <div className="flex h-full w-[279px] flex-col border-r border-b border-[#6a6a6a] bg-[#5c5c5c]">
        <div className="flex flex-1 gap-[10px] pt-[6px] pl-[5px]">
          <div className="flex w-[180px] flex-col justify-between pb-[7px]">
            <div className="flex">
              <RibbonBtn label="顶点"><path d="M3 8h2v2H3zM12 4h2v2h-2zM6 14h2v2H6z" stroke="#aaa" /></RibbonBtn>
              <RibbonBtn label="边"><path d="M1 10L18 3l-4 14z" /></RibbonBtn>
              <RibbonBtn label="边界"><path d="M6 2c8-3 12 4 9 9s-3 7-6 8-5-3-2-6-3-8-1-11z" /></RibbonBtn>
              <RibbonBtn label="多边形"><path d="M2 2h16v16H2z" fill="#aaa" stroke="#777" /></RibbonBtn>
              <RibbonBtn label="元素">{cubeShape}</RibbonBtn>
            </div>
            <div className="flex">
              <RibbonBtn label="预览关闭" className="w-[30px]">{cubeShape}<path d="M11 7v10l5-3z" fill="#ccc" stroke="#555" /></RibbonBtn>
              <RibbonBtn label="预览子对象" className="w-[30px]">{cubeShape}<path d="M10 7v10l5-3z" fill="#aaa" stroke="#555" /></RibbonBtn>
              <RibbonBtn label="预览多个" className="w-[30px]">{cubeShape}<path d="M11 7v10l5-3z" fill="#ccc" stroke="#555" /></RibbonBtn>
              <RibbonBtn label="约束" className="ml-[6px] w-[30px]"><path d="M2 4l7-2 7 2v7l-6 7-8-4zM9 2v14M2 9h14" /><circle cx="14" cy="13" r="3" fill="#999" /></RibbonBtn>
              <RibbonBtn label="软选择" className="ml-[5px] w-[49px]"><circle cx="10" cy="10" r="6" stroke="#858585" strokeWidth="4" /></RibbonBtn>
            </div>
          </div>
          <div className="mr-[-2px] mb-1 w-px bg-[#3a3a3a]" />
          <div className="flex flex-col gap-[3px] pt-[15px]">
            <RibbonBtn label="上一个修改器" className="w-[29px]"><path d="M2 4h8M2 8h7M2 12h7M2 16h7M13 18V4M10 8l3-4 3 4" /></RibbonBtn>
            <RibbonBtn label="下一个修改器" className="w-[29px]"><path d="M2 4h8M2 8h7M2 12h7M2 16h7M13 2v14M10 12l3 4 3-4" /></RibbonBtn>
          </div>
          <div className="-ml-1 flex flex-col gap-1">
            <RibbonBtn label="显示最终结果" className="w-[29px] outline-2 -outline-offset-1 outline-[#1f6fd0] bg-[#b9d7f5]"><path d="M1 1h9v18H1z" stroke="#889" fill="#cfe2f4" /><circle cx="6" cy="7" r="4" fill="#eef8ff" stroke="#79a" /><path d="M14 1h4v18h-4z" fill="#fff" stroke="#111" strokeWidth="2" /></RibbonBtn>
            <RibbonBtn label="锁定堆栈" className="w-[29px] bg-[#4e4e4e]"><path d="M0 10h6M7 6v8M8 8h6v4H8zM15 5h4v10h-4z" stroke="#aaa" fill="#666" /></RibbonBtn>
            <RibbonBtn label="切换命令面板" className="w-[29px] bg-[#4e4e4e]"><path d="M3 2h5v16H3z" fill="#8fc7de" stroke="#eee" /><path d="M3 9h15" stroke="#4b94e0" /><path d="M14 19v-8M11 14l3-4 3 4" stroke="#fff" strokeWidth="1.500" /></RibbonBtn>
          </div>
        </div>
        <button type="button" className="flex h-5 items-center justify-center gap-2 bg-gradient-to-b from-[#4a4a4a] to-[#555] text-[15px] leading-none text-[#e6e6e6]">
          多边形建模
          <svg width="9" height="6"><path d="M0 0h9L4.500 6z" fill="#eee" /></svg>
        </button>
      </div>
    </div>
  </section>
);

/* ---------- viewport ---------- */

const ROWS = [
  [127, 28],
  [179, 28],
  [230, 48],
  [302, 47],
];

// x, width, selected, rows drawn
const COLUMNS: [number, number, boolean, number[]][] = [
  [164, 21, false, [0, 1, 2, 3]],
  [211, 38, true, [0, 1, 2, 3]],
  [294, 50, false, [0, 1, 2, 3]],
  [407, 50, true, [0, 1, 2]],
  [520, 50, false, [0, 1, 2, 3]],
  [623, 42, true, [0, 1, 2, 3]],
  [850, 20, true, [0]],
  [901, 25, true, [0]],
  [972, 51, true, [0, 1, 2, 3]],
  [1075, 50, true, [0, 1, 2, 3]],
];

const Facade = () => (
  <svg className="absolute -top-[2px] -left-[2px] h-full w-full overflow-visible" fill="none" shapeRendering="crispEdges">
    <path d="M1300 115.500H148.500v255H1300" stroke="#fff" />
    {COLUMNS.map(([x, w, selected, rows]) =>
      rows.map((r) => (
        <rect key={`${x}-${r}`} x={x + 0.5} y={ROWS[r][0] + 0.5} width={w} height={ROWS[r][1]} stroke={selected ? '#fff' : '#8a6f10'} />
      ))
    )}
    {[422, 682, 1135].map((x) => (
      <rect key={x} x={x + 0.5} y={315.5} width={21} height={47} stroke="#fff" />
    ))}
    <path d="M828 119v9" stroke="#0a8a0a" strokeWidth="3" />
    <path d="M27.500 557v-25" stroke="#0000c8" />
    <path d="M27 557.500h25" stroke="#d00000" />
    <g fontFamily="Roboto" fontSize="15" shapeRendering="auto">
      <text x="828" y="119" fill="#e8e800">y</text>
      <text x="27" y="536" fill="#0000b8">z</text>
      <text x="52" y="561" fill="#d00000">x</text>
      <text x="27" y="561" fill="#139013">y</text>
    </g>
  </svg>
);

const QuadItems = ({ groups, right = false }: { groups: string[][]; right?: boolean }) => (
  <>
    {groups.map((group, g) => (
      <ul key={g} className={g ? 'border-t border-black' : ''}>
        {group.map((item) => {
          const hot = item === '转换为:' || item === '转换为可编辑多边形';
          return (
            <li key={item} className={`relative flex h-[17px] items-center pb-px ${hot ? 'bg-[#3c80dc]' : ''} ${right ? 'justify-end pr-[19px]' : 'pl-[18px]'}`}>
              <button type="button" className={hot || item === '长方体' ? 'text-white' : ''}>
                <T latin="text-[11px]">{item}</T>
              </button>
              {item === '顶层级' && <svg className="absolute right-[3px]" width="9" height="9"><path d="M1 5l2 3 5-8" fill="none" stroke="#000" strokeWidth="2" /></svg>}
              {['移动', '旋转', '缩放'].includes(item) && <span className="absolute right-[2px] h-[9px] w-[9px] border border-t-3 border-black" />}
              {item === '转换为:' && <svg className="absolute right-2" width="6" height="9"><path d="M0 0l6 4.500L0 9z" /></svg>}
            </li>
          );
        })}
      </ul>
    ))}
  </>
);

const QuadMenu = () => (
  <div className="absolute top-[125px] left-[691px] text-[13px] leading-none text-[#a0a0a0]">
    <div className="grid grid-cols-[144px_143px] items-end">
      <div className="border border-b-0 border-black bg-[#454545] pt-1">
        <QuadItems right groups={[['反转样条线', '设为首顶点'], ['拆分'], ['绑定', '取消绑定'], ['样条线', '线段', '顶点', '顶层级']]} />
      </div>
      <div className="border border-b-0 border-l-0 border-black bg-[#454545]">
        <QuadItems groups={[['弧', '矩形', '圆', '线'], ['平面', '长方体', '球体']]} />
      </div>
      {[['工具 1', '基本几何体'], ['工具 2', '变换']].map(([a, b]) => (
        <React.Fragment key={a}>
          <div className="flex h-[17px] items-center justify-between border border-b-0 border-black bg-[#3a3a3a] pl-[2px] font-bold">
            <T>{a}</T><span className="h-full w-4 bg-[#3c80dc]" />
          </div>
          <div className="flex h-[17px] items-center justify-between border border-b-0 border-l-0 border-black bg-[#3a3a3a] pr-1 font-bold">
            <span className="h-full w-4 bg-[#3c80dc]" /><T>{b}</T>
          </div>
        </React.Fragment>
      ))}
    </div>
    <div className="grid grid-cols-[144px_142px_155px] items-start">
      <div className="border border-black bg-[#454545] pb-[2px]">
        <QuadItems right groups={[['创建线', '附加', '分离线段'], ['连接'], ['细化', '细化连接'], ['循环顶点', '断开顶点', '焊接顶点', '熔合顶点']]} />
      </div>
      <div className="border border-r-0 border-l-0 border-black bg-[#454545]">
        <QuadItems groups={[['移动', '旋转', '缩放', '选择', '选择类似对象(S)'], ['克隆(C)'], ['对象属性(P)...'], ['转换为:']]} />
      </div>
      <div className="self-stretch border-black">
        <div className="h-[122px] w-px bg-black" />
        <div className="relative border border-black bg-[#454545]">
          <QuadItems groups={[['转换为可编辑样条线', '转换为可编辑网格', '转换为可编辑多边形', '转换为可编辑面片', '转换为 NURBS']]} />
          <span className="absolute top-[25px] -left-[7px] h-9 w-[180px] border-[3px] border-[#fb2b0c]" />
        </div>
      </div>
    </div>
  </div>
);

const Viewport = () => (
  <main className="relative mt-[2px] mr-1 min-w-0 flex-1 overflow-hidden border-2 border-[#7d6829] bg-gradient-to-b from-[#161616] via-[#383838] to-[#4c4c4c]">
    <Facade />
    <div className="relative flex items-center gap-[9px] pt-2 pl-[5px] text-[14px] leading-none text-[#cfcfcf]">
      <span>[+]</span><span>[前 ]</span><span>[标准 ]</span><span>[边面 ]</span>
      <Filter size={15} fill="#666" stroke="#666" />
    </div>
    <QuadMenu />
  </main>
);

const SideMenu = () => (
  <aside className="w-[55px] shrink-0 text-[16px] leading-none text-[#ececec]">
    <HGrip className="mt-1 mr-2 ml-[2px]" />
    <svg className="mt-[10px] ml-1" width="42" height="42">
      <circle cx="21" cy="21" r="20" fill="#858585" />
      <path d="M21 10l11 5-3 14-8 6-8-6-3-14z" fill="#fff" />
      <path d="M10 15l11 5 11-5M21 20v15" fill="none" stroke="#858585" strokeWidth="2" />
    </svg>
    <div className="mt-[2px] grid h-[375px] grid-rows-10 justify-items-start pl-[9px]">
      <button type="button" className="font-['Open_Sans'] text-[14px] text-[#6c9be0]">RDF3</button>
      {['渲染', '文件', '编辑', '选择', '显示', '变换', '动画', '模型', '室内'].map((m) => (
        <button key={m} type="button">{m}</button>
      ))}
    </div>
  </aside>
);

const Recorder = () => (
  <>
    <div className="absolute bottom-[25px] left-[10px] h-[185px] w-[42px] border border-[#333] bg-[#434343]">
      <HGrip className="mx-[3px] mt-[2px]" />
      <svg width="40" height="176" viewBox="0 0 40 176">
        <defs>
          <linearGradient id="rec" x2="0" y2="1"><stop stopColor="#2b66ff" /><stop offset="1" stopColor="#8a2bff" /></linearGradient>
        </defs>
        <rect x="1" y="6" width="38" height="38" rx="5" fill="#353535" />
        <circle cx="19" cy="24" r="12.500" fill="url(#rec)" />
        <path d="M17 30V18l4-1 4 4v4l-4 4z" fill="none" stroke="#fff" strokeWidth="2.400" />
        <path d="M26 29l7 5-7 5z" fill="#8a2bff" />
        <circle cx="20" cy="65" r="11" fill="none" stroke="#505050" strokeWidth="3" strokeDasharray="28 6" />
        <circle cx="20" cy="65" r="4" fill="#5c5c5c" />
        <path d="M5 97h24v16H5zM36 99v13l-6-4v-5z" fill="#5a5a5a" />
        <path d="M6 139h7l2-3h9l2 3h5v16H6z" fill="#5a5a5a" />
        <circle cx="19" cy="146" r="6" fill="#222" />
        <path d="M25 151h5v-3l5 5-5 5v-3h-5z" fill="#666" />
        <path d="M9 173h22v3H9z" fill="#5a5a5a" />
      </svg>
    </div>
    <div className="absolute bottom-0 left-0 flex h-[25px] w-[63px] items-center bg-white">
      <svg width="63" height="25">
        <path d="M6 3v22" stroke="#bbb" strokeWidth="2" strokeDasharray="2 3" />
        <circle cx="25" cy="14" r="10" fill="#13c683" />
        <path d="M23 20V9h4a3 3 0 0 1 0 6h-7" fill="none" stroke="#fff" strokeWidth="2.500" />
        <rect x="49" y="5" width="8" height="4" rx="2" fill="none" stroke="#888" />
        <path d="M49 18v4h8v-4" fill="none" stroke="#555" strokeWidth="2" />
      </svg>
    </div>
  </>
);

/* ---------- status bar ---------- */

const Coord = ({ axis, value }: { axis: string; value: string }) => (
  <label className="flex items-center gap-[3px] pl-[3px]">
    <span className="font-['Liberation_Mono'] text-[13px]">{axis}:</span>
    <span className="flex h-[21px] w-[84px] items-center bg-[#646464] pr-1">
      <input defaultValue={value} className="w-full min-w-0 bg-transparent pl-[3px] font-['Liberation_Mono'] text-[13px] text-[#e2e2e2] outline-none" />
      <svg className="shrink-0" width="6" height="13"><path d="M0 5h6L3 0zM0 8h6l-3 5z" fill="#ddd" /></svg>
    </span>
  </label>
);

const StatusBar = () => (
  <footer className="flex h-[66px] shrink-0 text-[15px] leading-none text-[#e8e8e8]">
    <div className="mt-[5px] ml-1 w-[124px] shrink-0">
      <div className="h-[27px] border-2 border-[#999] bg-[#dcc4c4]" />
      <div className="h-[31px] border-2 border-t-[#777] border-r-[#ddd] border-b-[#ddd] border-l-[#777] bg-white pt-[3px] pr-[3px] text-right text-[#0000e0]"><T>代码说明:1</T></div>
    </div>
    <div className="mt-[3px] ml-1 w-px bg-black" />
    <div className="flex flex-1 flex-col pt-3 pl-[6px]">
      <p className="h-[30px]"><T>选择了 1 个 图形</T></p>
      <p>单击并拖动以选择并移动对象</p>
    </div>
    <div className="w-[457px] shrink-0 pt-[8px]">
      <div className="flex h-[25px] items-center">
        <button type="button" aria-label="孤立当前选择" className="grid h-[25px] w-[26px] place-items-center rounded bg-[#5d87bf]">
          <svg width="20" height="20" fill="none" stroke="#e8e8e8" strokeWidth="1.500"><path d="M1 6V1h5M14 1h5v5M19 14v5h-5M6 19H1v-5" /><rect x="6" y="6" width="8" height="8" fill={TEAL} stroke="#333" /></svg>
        </button>
        <svg className="ml-[14px]" width="13" height="18"><path d="M3 8V5a3.500 3.500 0 0 1 7 0v3" fill="none" stroke={LIGHT} strokeWidth="2" /><path d="M0 8h13v10H0z" fill={LIGHT} /><path d="M5 10h3v3H7v3H6v-3H5z" fill="#333" /></svg>
        <svg className="mr-2 ml-[18px]" width="17" height="17"><path d="M0 0h17v17H0z" fill={LIGHT} /><path d="M3 6V3h3M11 3h3v3M14 11v3h-3M6 14H3v-3" fill="none" stroke="#444" strokeWidth="2" /><circle cx="8.500" cy="8.500" r="3" fill="none" stroke="#444" strokeWidth="1.500" /></svg>
        <Coord axis="X" value="-0.055m" />
        <Coord axis="Y" value="-4.042m" />
        <Coord axis="Z" value="17.543m" />
        <span className="ml-[5px] shrink-0"><T>栅格 =</T></span>
      </div>
      <div className="mt-[6px] flex h-[26px] items-center justify-end">
        <Sep />
        <button type="button" aria-label="安全" className="ml-1 grid h-[25px] w-6 place-items-center rounded bg-[#646464]">
          <svg width="14" height="16"><path d="M7 0l7 2v6c0 4-4 7-7 8-3-1-7-4-7-8V2z" fill={LIGHT} /><path d="M7 2v6H2V4zM7 8h5c0 3-3 5-5 6z" fill="#555" /></svg>
        </button>
        <span className="ml-2"><T>禁用:</T></span>
        <span className="mr-2 ml-2 h-[11px] w-[11px] rounded-full bg-[#f85454]" />
        <button type="button" className="grid h-[25px] w-6 place-items-center rounded bg-[#646464]">
          <span className="grid h-4 w-4 place-items-center rounded-full bg-white font-['Roboto'] text-[12px] font-bold text-[#333]">0</span>
        </button>
        <Sep />
        <button type="button" aria-label="时间标记" className="mr-[5px] ml-[3px] grid h-[25px] w-[26px] place-items-center rounded bg-[#5d87bf]">
          <svg width="18" height="18" fill="none" stroke="#ddd" strokeWidth="1.500"><path d="M9 1l7 4v8l-7 4-7-4V5zM9 5l4 2v4l-4 2-4-2V7zM5 7l4 2 4-2M9 9v4" /></svg>
        </button>
        <span className="z-10 -mr-[39px] flex h-6 w-[83px] shrink-0 items-center overflow-hidden bg-[#444] text-[14px] whitespace-nowrap">添加时间标记</span>
      </div>
    </div>
  </footer>
);

/* ---------- AutoNavi script panel ---------- */

const ScriptRow = ({ text, tail = '' }: { text: string; tail?: string }) => (
  <div className="flex h-6 gap-[2px]">
    <Btn text={text} className="flex-1" />
    <Btn text={tail} className="w-[10px]" />
  </div>
);

const ScriptPanel = () => (
  <aside className="flex w-[132px] shrink-0 flex-col overflow-hidden pr-[3px] pl-1 text-[15px] leading-none text-[#e8e8e8]">
    <HGrip className="mt-1 shrink-0" />
    <div className="mt-[6px] flex h-[23px] shrink-0 items-center justify-between pr-px">
      <h2 className="w-[99px] overflow-hidden font-['Liberation_Mono'] text-[13px] text-white">AutoNaviTTool</h2>
      <Btn text="x" className="h-[17px] w-[17px]" />
    </div>
    <div className="flex h-[271px] shrink-0 flex-col justify-between">
      <div className="flex h-6 gap-[2px]">
        <Btn text="物体命名" className="flex-1" />
        <svg width="25" height="25"><path d="M0 0h25v25H0z" fill="#666" /><path d="M17 0h8v10l-6-3zM0 17h13v8H0zM0 0h7L0 8z" fill="#d5d5d5" /></svg>
      </div>
      <ScriptRow text="优化材质" tail="v" />
      <ScriptRow text="** 优化材质 **" tail="v" />
      {['命名材质贴图', '清除光滑组', '游离点和空物体', '清空材质球'].map((t) => <ScriptRow key={t} text={t} />)}
      <div className="flex h-6 gap-[2px]">
        <Btn text="坐标归零" className="flex-1" />
        <Btn text="中" className="w-[22px]" />
        <Btn text="底" className="w-[22px]" />
        <Btn className="w-[10px]" />
      </div>
      <ScriptRow text="材质贴图检查" />
      <ScriptRow text="导出USX" />
    </div>
    <div className="mt-1 mb-[3px] h-[9px] shrink-0 border-t-2 border-l-2 border-black" />
    <div className="flex h-[134px] shrink-0 flex-col justify-between">
      <ScriptRow text="焊点" />
      <ScriptRow text="展UV" />
      {['去除贴图', '选择无贴图的面', '选择同ID的面'].map((t) => <Btn key={t} text={t} className="h-6" />)}
    </div>
    <div className="mt-[3px] flex h-5 shrink-0 gap-[3px]">
      <Btn text="?" className="w-[19px]" />
      <Btn text="<" className="w-3" />
      <button type="button" aria-label="锁定" className="grid w-[18px] place-items-center rounded bg-[#646464]">
        <svg width="14" height="16"><path d="M3 7V4a4 4 0 0 1 8 0v3" fill="none" stroke="#fff" strokeWidth="2" /><path d="M0 7h14v9H0z" fill="#efcf9c" stroke="#333" /><path d="M6 9h2v5H6z" fill="#222" /></svg>
      </button>
      <Btn text=">" active className="w-3" />
      <Btn text=">>>>>" className="flex-1" />
    </div>
    <div className="mt-[2px] grid h-6 shrink-0 grid-cols-4 gap-[3px]">
      {['1', '2', '3', '4'].map((t) => <Btn key={t} text={t} />)}
    </div>
    <button type="button" className="mt-1 h-[7px] shrink-0 overflow-hidden rounded bg-[#646464] font-['Liberation_Mono'] text-[9px] leading-[5px]">v</button>
    <div className="mt-[3px] grid h-[134px] shrink-0 grid-cols-2 content-between gap-x-[3px]">
      {['Breake', 'Extrude', 'Weld', 'T Weld', 'Connect', 'Chamfer', 'Bridge', 'Cut', 'DelePlan', 'Slice'].map((t) => (
        <Btn key={t} text={t} className="h-6" />
      ))}
    </div>
  </aside>
);

/* ---------- command panel ---------- */

const Dots = () => (
  <svg className="ml-auto" width="8" height="8">
    <path d="M0 .5h8M0 3h8M0 5.500h8M0 8h8" stroke="#999" strokeDasharray="1 1.300" />
  </svg>
);

const Rollout = ({ title, open = false, className = '', children }: { title: string; open?: boolean; className?: string; children?: React.ReactNode }) => (
  <section className={`shrink-0 overflow-hidden rounded border border-[#484848] bg-[#525252] ${className}`}>
    <h3 className="flex h-5 items-center gap-[10px] px-[7px] pr-2 font-bold text-white">
      <svg width="8" height="8">{open ? <path d="M0 1h8L4 7z" fill="#bbb" /> : <path d="M1 0l6 4-6 4z" fill="#bbb" />}</svg>
      {title}
      <Dots />
    </h3>
    {children}
  </section>
);

const Check = ({ label, className = '' }: { label: string; className?: string }) => (
  <label className={`flex items-center gap-[6px] ${className}`}>
    <input type="checkbox" disabled className="h-[15px] w-[15px] appearance-none border border-[#474747] bg-[#5a5a5a]" />
    <T>{label}</T>
  </label>
);

const Radio = ({ label, name, checked = false, className = '' }: { label: string; name: string; checked?: boolean; className?: string }) => (
  <label className={`flex items-center gap-[6px] whitespace-nowrap ${className}`}>
    <input
      type="radio"
      name={name}
      defaultChecked={checked}
      className="h-4 w-4 shrink-0 appearance-none rounded-full border-4 border-[#646464] bg-[#646464] checked:bg-[#dcdcdc]"
    />
    <T>{label}</T>
  </label>
);

const CmdTab = ({ label, active = false, children }: { label: string; active?: boolean; children: React.ReactNode }) => (
  <button type="button" aria-label={label} className={`grid h-[35px] w-10 place-items-center border-r border-[#333] ${active ? 'bg-[#484848]' : ''}`}>
    {children}
  </button>
);

const ModifyColumn = () => (
  <div className="flex w-[214px] shrink-0 flex-col pl-px">
    <div className="mt-[6px] flex h-6 gap-[6px]">
      <input aria-label="对象名称" defaultValue="图形007" className="w-[183px] bg-[#646464] pl-2 text-white outline-none" />
      <span className="w-6 border border-black bg-[#bbab35]" />
    </div>
    <Combo label="修改器列表" value="修改器列表" className="mt-[6px] h-6 w-full" />
    <div className="mt-[14px] mr-1 ml-[2px] grid h-[108px] grid-cols-2 content-between gap-x-1">
      <Btn text="FFD 2x2x2" className="h-6" />
      <Btn text="挤出" className="h-6" />
      <Btn text="扫描" className="h-6" />
      <Btn text="多边形选择" className="h-6" />
      <Btn text="体积选择" className="h-6" />
      <Btn text="FFD 选择" disabled className="h-6" />
      <Btn text="曲面选择" disabled className="h-6" />
    </div>
    <div className="mt-2 h-[134px] border border-white">
      <div className="flex h-[21px] items-center border-b border-[#777]">
        <svg className="mx-[9px] shrink-0" width="6" height="8"><path d="M0 0l6 4-6 4z" fill="#ddd" /></svg>
        <span className="flex h-full flex-1 items-center bg-[#5d87bf] pl-[3px] text-white">可编辑样条线</span>
      </div>
    </div>
    <div className="mt-[6px] flex h-7 items-center pl-[5px]">
      <Pin size={18} fill={LIGHT} stroke={LIGHT} className="mr-[9px] rotate-45" />
      <Sep />
      <svg className="mr-4 ml-3" width="10" height="23"><path d="M0 1h10" stroke={LIGHT} strokeWidth="2" /><path d="M2 2h6v20H2z" fill="#333" stroke={LIGHT} /><path d="M3 12h4v9H3z" fill={TEAL} /></svg>
      <Sep />
      <svg className="mx-[5px]" width="24" height="24" {...off}><circle cx="6" cy="6" r="5" /><circle cx="13" cy="18" r="5" /><circle cx="18" cy="17" r="5" /><path d="M12 5h7v6" /></svg>
      <svg className="mr-[9px] ml-[5px]" width="18" height="24" {...off}><path d="M6 3V1h6v2M1 3h16v3H1zM2 8h14v15H2zM6 10v11M9 10v11M12 10v11" /></svg>
      <Sep />
      <svg className="ml-[6px]" width="23" height="23"><path d="M0 1h16v22H0z" fill={LIGHT} /><path d="M2 8h5v5H2zM9 8h5v5H9zM2 16h5v5H2zM9 16h5v5H9z" fill="none" stroke="#444" /><path d="M1 5h14" stroke="#444" /><path d="M12 12L22 2" stroke={AMBER} strokeWidth="3" /></svg>
    </div>
    <div className="mt-[26px] flex h-1 items-center px-[6px]">
      <span className="h-px flex-1 bg-[#6c6c6c]" /><HGrip className="mx-1 w-3" /><span className="h-px flex-1 bg-[#6c6c6c]" />
    </div>
    <div className="mt-[6px] flex flex-1 justify-between">
      <div className="flex w-[202px] flex-col gap-1">
        <Rollout title="渲染" className="h-[23px]" />
        <Rollout title="插值" className="h-[23px]" />
      </div>
      <span className="w-[6px] rounded bg-[#393939]" />
    </div>
  </div>
);

const legend = 'ml-[6px] px-[2px] leading-none';

const ParamsColumn = () => (
  <div className="flex w-[205px] shrink-0 flex-col gap-1 overflow-hidden pt-[6px] pl-px">
    <Rollout title="选择" open className="h-[363px] text-[#9c9c9c]">
      <div className="mx-auto mt-3 flex h-7 w-[84px] items-center justify-around bg-[#404040]">
        <svg width="20" height="20" fill={TEAL}><circle cx="10" cy="3" r="2.500" /><circle cx="3" cy="10" r="2.500" /><circle cx="17" cy="10" r="2.500" /><circle cx="8" cy="17" r="2.500" /></svg>
        <svg width="20" height="20" fill="none" stroke={TEAL} strokeWidth="2"><path d="M6 18L13 2" /><path d="M1 10l4 6M15 4l3 8" strokeDasharray="2 2" /></svg>
        <svg width="20" height="20" fill="none" stroke={TEAL} strokeWidth="2.500"><path d="M1 12l5 6L13 2l6 7" /></svg>
      </div>
      <fieldset className="mx-[10px] mt-2 h-12 border border-[#3a3a3a]">
        <legend className={legend}><T>命名选择:</T></legend>
        <div className="flex justify-center gap-[13px]">
          <Btn text="复制" disabled className="h-[22px] w-16" />
          <Btn text="粘贴" disabled className="h-[22px] w-16" />
        </div>
      </fieldset>
      <div className="mx-[10px] mt-[6px] flex h-[124px] flex-col gap-[7px] border border-[#3a3a3a] pt-[5px] pl-[9px]">
        <Check label="锁定控制柄" className="ml-[14px]" />
        <div className="flex gap-[17px] pl-[18px] opacity-60">
          <Radio label="相似" name="handles" checked />
          <Radio label="全部" name="handles" />
        </div>
        <div className="flex justify-between pr-[5px]">
          <Check label="区域选择:" />
          <span className="-my-[2px] flex h-5 w-[57px] items-center border border-[#474747] bg-[#606060] pr-1">
            <input aria-label="区域" defaultValue="0.1m" className="w-full min-w-0 bg-transparent pl-[3px] font-['Liberation_Mono'] text-[13px] text-[#ddd]" />
            <svg className="shrink-0" width="6" height="11"><path d="M0 4h6L3 0zM0 7h6l-3 4z" fill="#999" /></svg>
          </span>
        </div>
        <Check label="线段端点" />
        <Btn text="选择方式..." disabled className="-mt-[3px] ml-[34px] h-6 w-[88px] shrink-0" />
      </div>
      <fieldset className="mx-[10px] mt-[2px] h-[62px] border border-[#3a3a3a]">
        <legend className={legend}>显示</legend>
        <Check label="显示顶点编号" className="mt-1 ml-[21px]" />
        <Check label="仅选定" className="mt-[7px] ml-[56px]" />
      </fieldset>
      <p className="mt-[2px] mr-[14px] text-right text-white">选择了整个对象</p>
    </Rollout>
    <Rollout title="软选择" className="h-[23px]" />
    <Rollout title="几何体" open className="h-[137px] text-[#ececec]">
      <fieldset className="mx-[11px] mt-[6px] h-[70px] overflow-hidden border border-[#3a3a3a]">
        <legend className={legend}>新顶点类型</legend>
        <div className="grid grid-cols-[65px_1fr] gap-y-[7px] pt-[7px] pl-[5px]">
          <Radio label="线性" name="vertexType" checked />
          <Radio label="Bezier" name="vertexType" />
          <Radio label="平滑" name="vertexType" />
          <Radio label="Bezier 角点" name="vertexType" />
        </div>
      </fieldset>
      <div className="mt-1 flex gap-3 px-[12px]">
        <Btn text="创建线" className="h-[22px] w-[82px]" />
        <Btn text="断开" disabled className="h-[22px] w-[82px]" />
      </div>
      <Btn text="附加" className="mt-[6px] ml-[12px] h-[22px] w-[82px]" />
    </Rollout>
  </div>
);

const CommandPanel = () => (
  <aside className="flex min-h-0 flex-1 flex-col overflow-hidden text-[15px] leading-none text-[#e4e4e4]">
    <HGrip className="mt-1 mr-2 ml-[8px] shrink-0" />
    <div className="mt-[5px] mr-1 ml-[6px] flex h-[35px] shrink-0 bg-[#3a3a3a]">
      <CmdTab label="创建"><svg width="20" height="20"><path d="M8 0h4v8h8v4h-8v8H8v-8H0V8h8z" fill="#929292" /></svg></CmdTab>
      <CmdTab label="修改" active>
        <svg width="22" height="22" fill="none" stroke={TEAL} strokeWidth="1.600"><path d="M3 3h16v16H3z" /><path d="M5 18C6 9 11 5 18 4" stroke="#ddd" strokeWidth="2.500" /><path d="M1 1h4v4H1zM17 1h4v4h-4zM1 17h4v4H1zM17 17h4v4h-4z" fill="#444" /></svg>
      </CmdTab>
      <CmdTab label="层次"><svg width="20" height="22"><path d="M2 0h16v8H2z" fill="#929292" /><path d="M0 16h7v6H0zM13 16h7v6h-7z" fill="#3b8787" /><path d="M10 8v4M4 16v-4h12v4" fill="none" stroke="#3b8787" /></svg></CmdTab>
      <CmdTab label="运动"><svg width="24" height="20"><circle cx="15" cy="10" r="8.500" fill="#929292" /><path d="M9 2C1 4 1 16 9 18M6 2c-8 3-7 13 0 16" fill="none" stroke="#3b8787" strokeWidth="1.500" /></svg></CmdTab>
      <CmdTab label="显示"><svg width="20" height="20"><path d="M0 1h20v12H0zM7 16h6v1h3v2H4v-2h3z" fill="#929292" /></svg></CmdTab>
      <CmdTab label="工具"><Wrench size={20} fill="#929292" stroke="#929292" strokeWidth={1} className="-scale-x-100" /></CmdTab>
    </div>
    <div className="flex min-h-0 flex-1 pb-[2px] pl-[9px]">
      <ModifyColumn />
      <ParamsColumn />
      <div className="mt-[6px] ml-1 w-[7px] shrink-0 rounded bg-[#393939]"><div className="h-[188px] rounded border border-[#3a3a3a] bg-[#565656]" /></div>
    </div>
  </aside>
);

const Playback = () => (
  <div className="flex h-[66px] shrink-0 gap-[5px] pt-[6px] text-[15px] leading-none">
    <div className="w-[120px]">
      <svg width="110" height="26">
        <g fill={LIGHT}>
          <path d="M0 12l7-6v12zM9 6h3v12H9zM14 6h3v12h-3zM29 3l15 9-15 9zM55 6h3v12h-3zM60 6h3v12h-3zM65 6l8 6-8 6zM86 7l7 5-7 5zM94 7l7 5-7 5zM102 5h3v14h-3zM49 18v5h-5z" />
        </g>
        <path d="M78.500 2v20" stroke="#111" />
      </svg>
      <div className="mt-[2px] flex items-center">
        <span className="flex h-[21px] w-[78px] items-center bg-[#646464] pr-1">
          <input aria-label="当前帧" defaultValue=")" className="w-full min-w-0 bg-transparent font-['Liberation_Mono'] text-[13px] text-[#ddd]" />
          <svg width="6" height="12"><path d="M0 5h6L3 0zM0 7h6l-3 5z" fill="#ddd" /></svg>
        </span>
        <Sep />
        <svg className="ml-[3px]" width="20" height="20"><circle cx="8" cy="8" r="7.500" fill={LIGHT} /><path d="M8 3v5h4" fill="none" stroke="#444" strokeWidth="1.500" /><circle cx="14" cy="14" r="4" fill="#444" stroke={AMBER} strokeWidth="2.500" strokeDasharray="3 1" /></svg>
      </div>
    </div>
    <button type="button" aria-label="设置关键点" className="h-[54px] w-[50px] rounded bg-[#646464] pl-[7px]">
      <svg width="36" height="40"><path d="M13 4h6v14h13v6H19v12h-6V24H0v-6h13z" fill={LIGHT} /><circle cx="22" cy="32" r="4.500" fill="none" stroke={TEAL} strokeWidth="2.500" /><path d="M25 29l10-9M31 23l3 3" stroke={TEAL} strokeWidth="2.500" /></svg>
    </button>
    <div className="flex w-[81px] flex-col gap-[2px]">
      <Btn text="自动" className="h-[26px]" />
      <Btn text="设置关键点" className="h-[26px]" />
    </div>
    <div className="w-[140px]">
      <Combo label="选定对象" value="选定对象" className="h-[22px] w-full" />
      <div className="mt-[5px] flex items-center justify-between">
        <svg width="24" height="24"><path d="M4 22c4-4 5-9 5-18M22 22c-4-4-5-9-5-18" fill="none" stroke={TEAL} strokeWidth="2.500" /><circle cx="4" cy="4" r="2" fill={LIGHT} /><circle cx="21" cy="4" r="2" fill={LIGHT} /><path d="M10 1h5v5h-5z" fill="#333" stroke={LIGHT} /></svg>
        <div className="relative">
          <Btn text="过滤器..." className="h-[27px] w-[107px]" />
          <svg className="absolute top-[16px] left-[40px]" width="46" height="18">
            <path d="M2 1l10 5-9 8zM44 1L34 6l9 8z" fill="#3ee6a8" stroke="#333" />
            <ellipse cx="23" cy="15" rx="18" ry="10" fill="#fff" stroke="#333" />
            <ellipse cx="23" cy="19" rx="11" ry="6" fill="#9be0d0" />
          </svg>
        </div>
      </div>
    </div>
    <svg className="ml-auto" width="22" height="54">
      <circle cx="14" cy="9" r="6.500" fill="none" stroke={LIGHT} strokeWidth="2.400" /><path d="M9 14l-7 7" stroke={LIGHT} strokeWidth="3.500" />
      <rect x="3" y="31" width="17" height="15" fill="none" stroke={LIGHT} strokeDasharray="3 2" /><circle cx="13" cy="39" r="5" fill="#444" stroke={TEAL} strokeWidth="2" /><path d="M9 43l-6 5" stroke={TEAL} strokeWidth="2.500" />
    </svg>
  </div>
);

/* ---------- far right tool list ---------- */

const LEFT_TOOLS = ['添加', '添加列表', '加点', '焊接', '强制焊接', '连接', '扩边', '修剪', '延伸', '等分面板', '自动等分', '分离', '规格化', '优化'];
const RIGHT_TOOLS = ['视图', '选择', 'HFI', '属性', 'MRS', '堆栈', '组', '装载', '塌陷', '图形', '材质', '清理', '修改', '工具', '高级', '其它'];

const RightTools = () => (
  <aside className="flex w-[103px] shrink-0 flex-col overflow-hidden pt-1 text-[15px] leading-none text-[#e4e4e4]">
    <HGrip className="ml-[2px] shrink-0" />
    <div className="mt-[6px] flex flex-1 flex-col border-t border-r border-l-2 border-t-[#999] border-r-white border-l-[#999] pt-px">
      <div className="grid h-[456px] grid-cols-[68px_31px] grid-rows-[repeat(16,24px)] content-between gap-x-[2px]">
        {RIGHT_TOOLS.map((t, i) => (
          <React.Fragment key={t}>
            {LEFT_TOOLS[i] ? <Btn text={LEFT_TOOLS[i]} /> : <span />}
            <Btn text={t} active={t === '图形'} />
          </React.Fragment>
        ))}
      </div>
      <div className="relative mt-auto h-[66px]">
        <div className="grid grid-cols-3 gap-[5px]">
          <Btn text="A" className="h-[18px]" />
          <Btn text="B" className="h-[18px]" />
          <Btn text="C" className="h-[18px]" />
        </div>
        <div className="mt-[6px] flex items-center justify-between pl-1">
          <label className="flex items-center gap-[5px]">
            <input type="checkbox" className="h-4 w-4 appearance-none bg-[#5e5e5e]" />
            <span className="font-['Liberation_Mono'] text-[13px]">UI</span>
          </label>
          <Combo label="单位" value="米" className="h-[21px] w-[52px]" />
        </div>
        <div className="mt-[13px] ml-2 h-4 rounded-t border-t-4 border-[#777] bg-white" />
        <svg className="absolute top-1 left-[33px]" width="24" height="26"><path d="M0 0h24v26H0z" fill="#444" /><path d="M12 5l8 4v8l-8 5-8-5V9z" fill={TEAL} /><path d="M4 9l8 4 8-4M12 13v9" fill="none" stroke="#1d5c5c" /><path d="M1 6V1h5M18 1h5v5M1 19v5h5M24 20v6h-6z" fill="none" stroke="#ddd" strokeDasharray="3 1" /></svg>
      </div>
    </div>
  </aside>
);

const App: React.FC = () => {
  return (
    <div className="relative flex h-screen flex-col overflow-hidden bg-[#444] font-['Noto_Sans_CJK_SC',sans-serif]">
      <TitleBar />
      <MenuBar />
      <Toolbars />
      <Ribbon />
      <div className="flex min-h-0 flex-1">
        <div className="flex min-w-0 flex-1 flex-col">
          <div className="flex min-h-0 flex-1">
            <SideMenu />
            <Viewport />
          </div>
          <StatusBar />
        </div>
        <ScriptPanel />
        <div className="flex w-[445px] shrink-0 flex-col">
          <CommandPanel />
          <Playback />
        </div>
        <RightTools />
      </div>
      <Recorder />
    </div>
  );
};

export default App;
